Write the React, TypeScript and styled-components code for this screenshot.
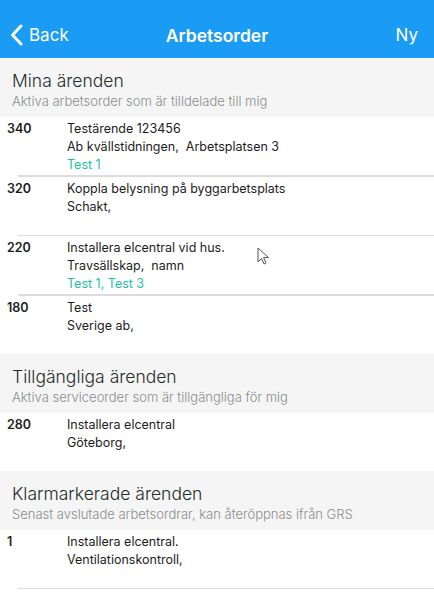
import styled, { createGlobalStyle } from "styled-components";

type Order = {
  number: string;
  title: string;
  place: string;
  tags?: string;
};

type Section = {
  title: string;
  subtitle: string;
  orders: Order[];
  trailingLine?: boolean;
};

const sections: Section[] = [
  {
    title: "Mina ärenden",
    subtitle: "Aktiva arbetsorder som är tilldelade till mig",
    orders: [
      {
        number: "340",
        title: "Testärende 123456",
        place: "Ab kvällstidningen,  Arbetsplatsen 3",
        tags: "Test 1",
      },
      { number: "320", title: "Koppla belysning på byggarbetsplats", place: "Schakt," },
      {
        number: "220",
        title: "Installera elcentral vid hus.",
        place: "Travsällskap,  namn",
        tags: "Test 1, Test 3",
      },
      { number: "180", title: "Test", place: "Sverige ab," },
    ],
  },
  {
    title: "Tillgängliga ärenden",
    subtitle: "Aktiva serviceorder som är tillgängliga för mig",
    orders: [{ number: "280", title: "Installera elcentral", place: "Göteborg," }],
  },
  {
    title: "Klarmarkerade ärenden",
    subtitle: "Senast avslutade arbetsordrar, kan återöppnas ifrån GRS",
    orders: [{ number: "1", title: "Installera elcentral.", place: "Ventilationskontroll," }],
    trailingLine: true,
  },
];

export default function App() {
  return (
    <>
      <GlobalStyle />
      <Screen>
        <NavBar>
          <NavButton>
            <svg width="13" height="22" viewBox="0 0 13 22">
              <path
                d="M11 2 L2.5 11 L11 20"
                fill="none"
                stroke="#fff"
                strokeWidth="3"
                strokeLinecap="round"
                strokeLinejoin="round"
              />
            </svg>
            Back
          </NavButton>
          <NavTitle>Arbetsorder</NavTitle>
          <NavButton $right>Ny</NavButton>
        </NavBar>

        {sections.map((section) => (
          <div key={section.title}>
            <SectionHeader>
              <SectionTitle>{section.title}</SectionTitle>
              <SectionSubtitle>{section.subtitle}</SectionSubtitle>
            </SectionHeader>
            {section.orders.map((order, i) => (
              <div key={order.number}>
                <Row>
                  <OrderNumber>{order.number}</OrderNumber>
                  <Details>
                    <Line>{order.title}</Line>
                    <Line>{order.place}</Line>
                    {order.tags ? <Tags>{order.tags}</Tags> : null}
                  </Details>
                </Row>
                {i < section.orders.length - 1 || section.trailingLine ? (
                  <Separator />
                ) : null}
              </div>
            ))}
          </div>
        ))}

        <Cursor width="14" height="20" viewBox="0 0 14 20">
          <path
            d="M1 1 L1 15 L4.5 11.5 L7 17 L9 16 L6.6 10.6 L11.5 10.6 Z"
            fill="#fff"
            stroke="#555"
            strokeWidth="1"
            strokeLinejoin="round"
          />
        </Cursor>
      </Screen>
    </>
  );
}

const GlobalStyle = createGlobalStyle`
  body {
    margin: 0;
    background: #ffffff;
    font-family: Inter, "Liberation Sans", sans-serif;
  }
`;

const Screen = styled.div`
  position: relative;
  width: 434px;
  min-height: 592px;
  background: #ffffff;
  overflow: hidden;
`;

const NavBar = styled.div`
  height: 58px;
  background: #1a9bf4;
  display: grid;
  grid-template-columns: 1fr auto 1fr;
  align-items: center;
  padding: 0 16px 0 10px;
  color: #fff;
`;

const NavButton = styled.div<{ $right?: boolean }>`
  display: flex;
  align-items: center;
  gap: 6px;
  justify-content: ${(p) => (p.$right ? "flex-end" : "flex-start")};
  font-size: 17px;
  font-weight: 400;
  padding-top: 12px;
`;

const NavTitle = styled.div`
  font-size: 17.5px;
  font-weight: 600;
  padding-top: 12px;
  padding-left: 6px;
`;

const SectionHeader = styled.div`
  background: #f5f5f5;
  height: 59px;
  padding: 12px 12px 0;
  box-sizing: border-box;
`;

const SectionTitle = styled.div`
  font-size: 17.5px;
  font-weight: 300;
  color: #1f2d28;
  line-height: 22px;
`;

const SectionSubtitle = styled.div`
  font-size: 13px;
  font-weight: 300;
  color: #8a8d8c;
  line-height: 16px;
  margin-top: 1px;
`;

const Row = styled.div`
  display: flex;
  min-height: 58px;
  box-sizing: border-box;
  padding: 3px 0 0 7px;
`;

const Separator = styled.div`
  height: 1.5px;
  margin-left: 18px;
  background: #dcdcdc;
`;

const OrderNumber = styled.div`
  width: 60px;
  font-size: 12.5px;
  font-weight: 600;
  color: #1c1c1c;
  line-height: 18px;
`;

const Details = styled.div`
  display: flex;
  flex-direction: column;
`;

const Line = styled.div`
  font-size: 12.5px;
  color: #1c1c1c;
  line-height: 18px;
  white-space: pre;
`;

const Tags = styled(Line)`
  color: #1fc0a6;
`;

const Cursor = styled.svg`
  position: absolute;
  left: 257px;
  top: 247px;
`;
